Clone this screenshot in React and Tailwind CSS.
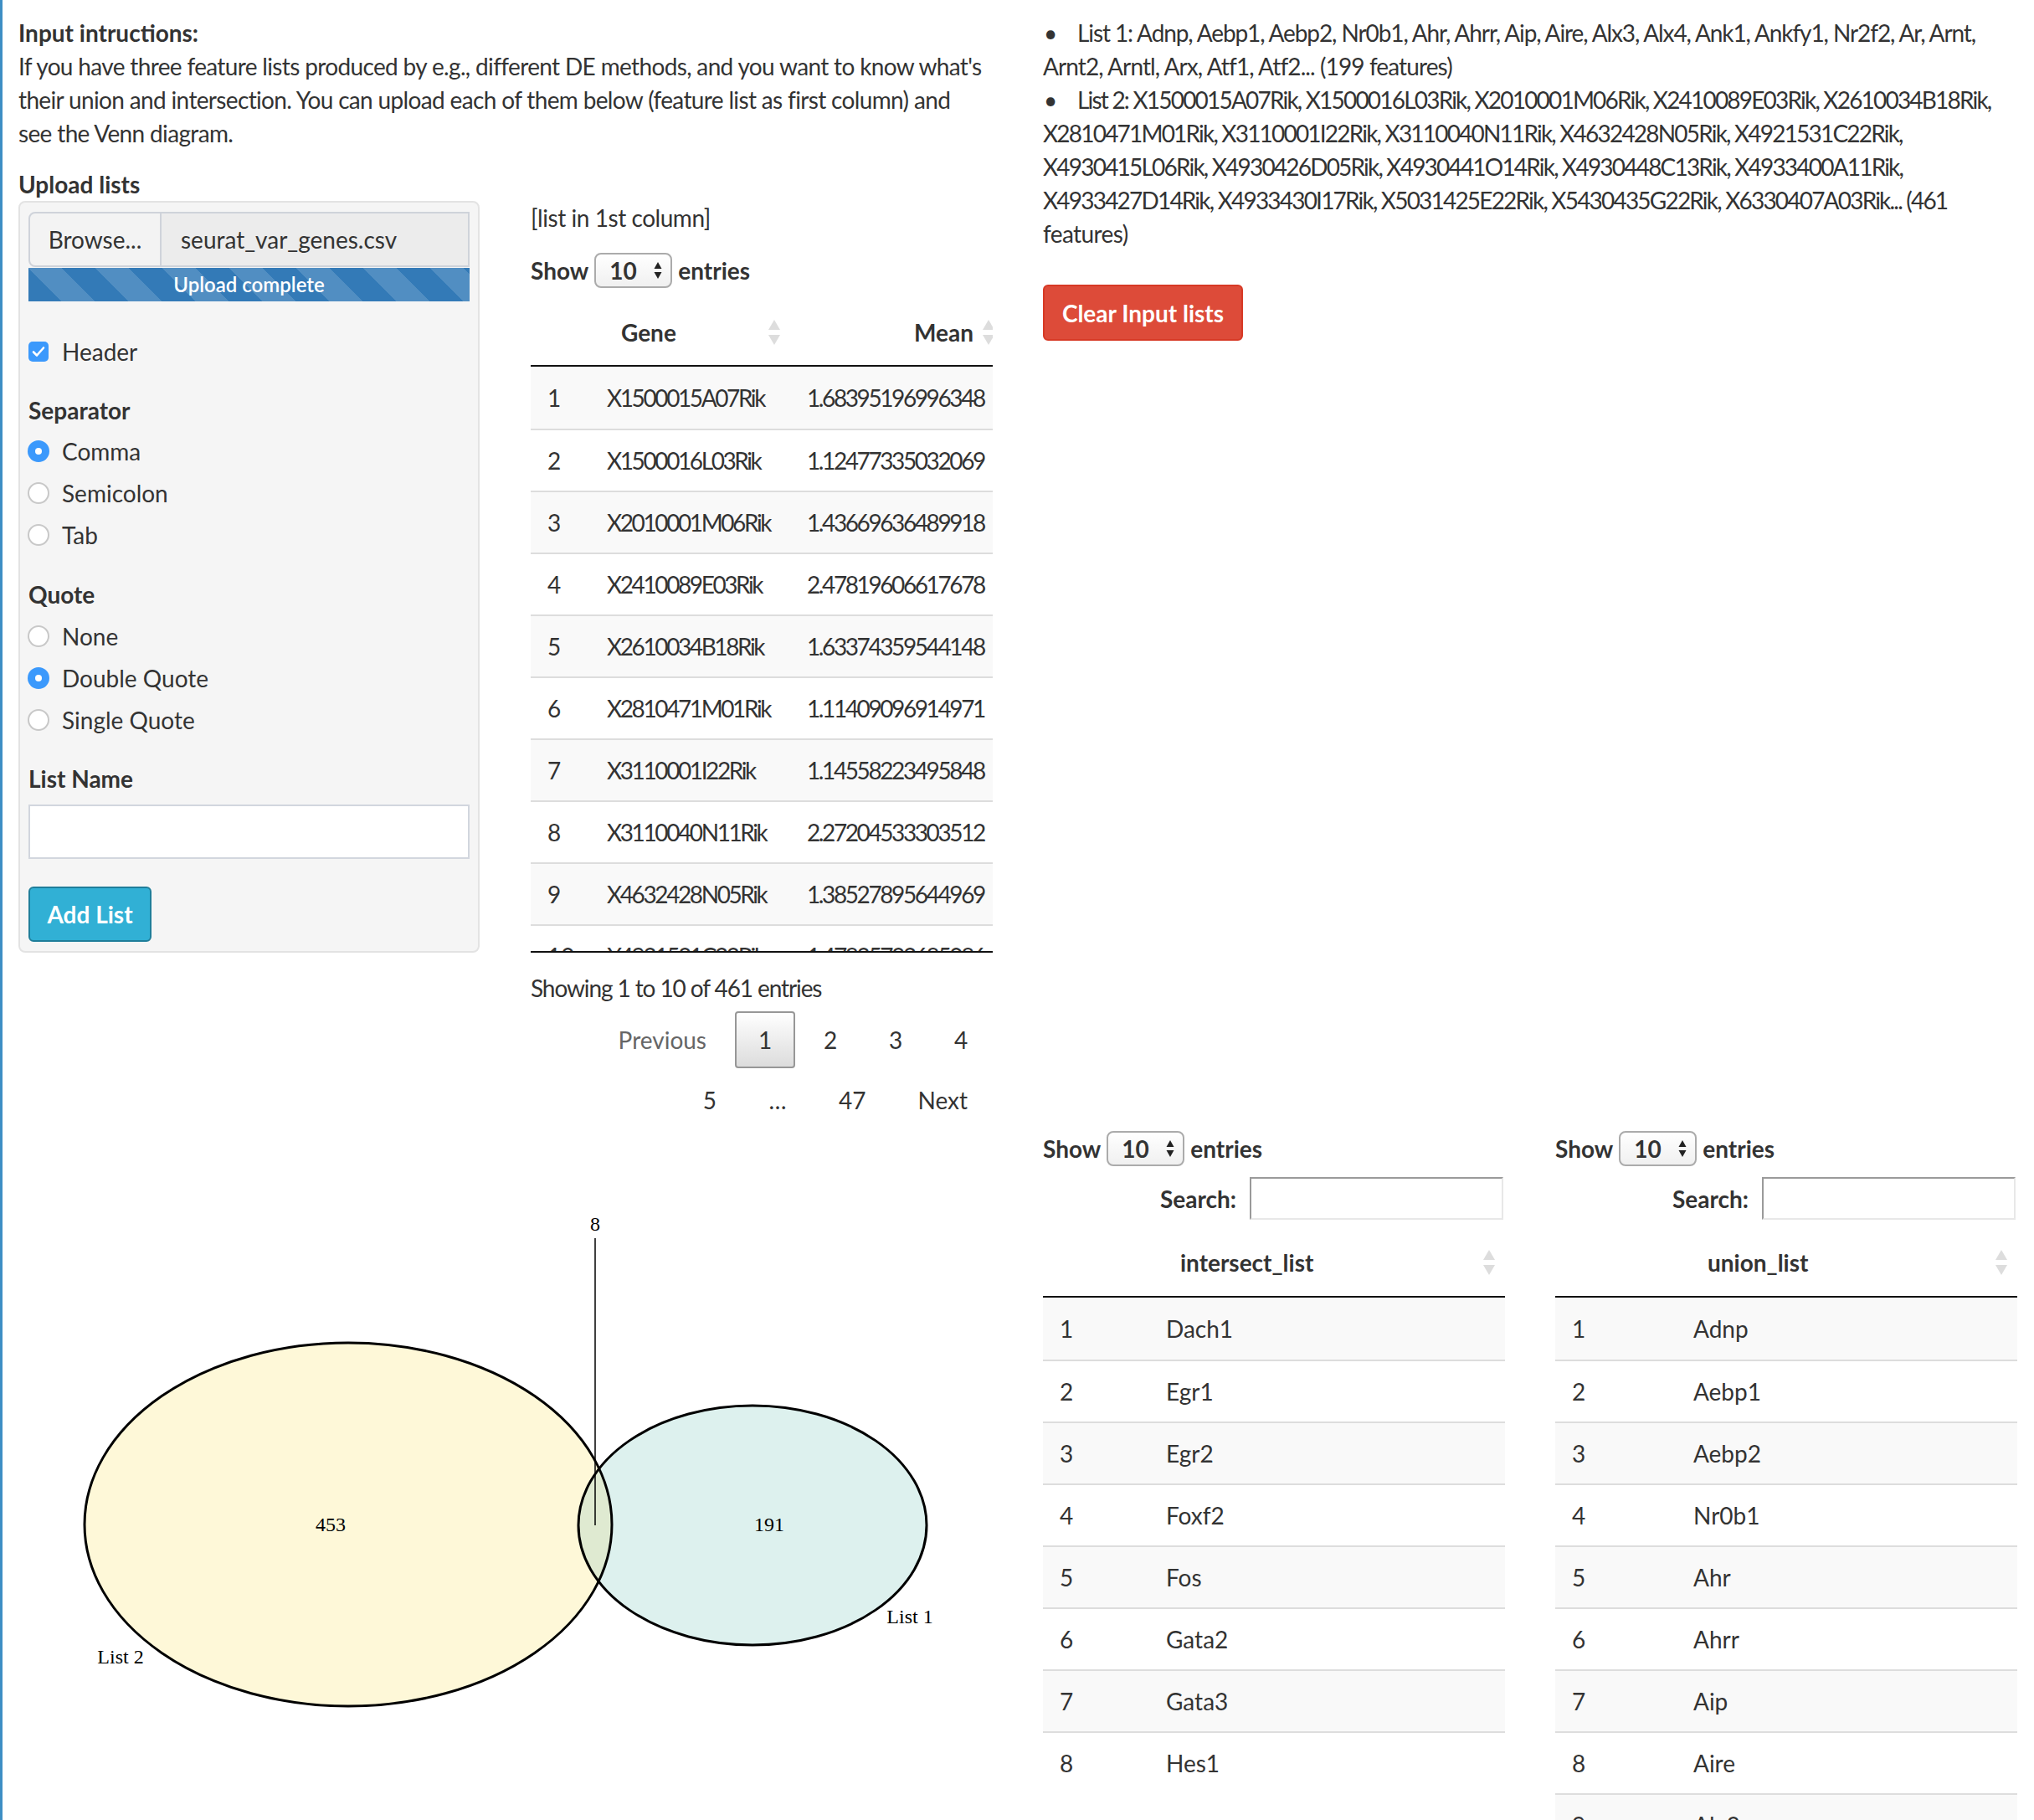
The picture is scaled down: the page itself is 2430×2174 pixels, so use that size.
import React from 'react';

const genes = [
  ['X1500015A07Rik', '1.68395196996348'],
  ['X1500016L03Rik', '1.12477335032069'],
  ['X2010001M06Rik', '1.43669636489918'],
  ['X2410089E03Rik', '2.47819606617678'],
  ['X2610034B18Rik', '1.63374359544148'],
  ['X2810471M01Rik', '1.11409096914971'],
  ['X3110001I22Rik', '1.14558223495848'],
  ['X3110040N11Rik', '2.27204533303512'],
  ['X4632428N05Rik', '1.38527895644969'],
  ['X4921531C22Rik', '1.47825732685086'],
];

const intersectList = ['Dach1', 'Egr1', 'Egr2', 'Foxf2', 'Fos', 'Gata2', 'Gata3', 'Hes1'];
const unionList = ['Adnp', 'Aebp1', 'Aebp2', 'Nr0b1', 'Ahr', 'Ahrr', 'Aip', 'Aire', 'Alx3'];

function SortIcon() {
    return (
        <svg width="14" height="30" viewBox="0 0 14 30" className="absolute right-[12px] top-1/2 -translate-y-1/2">
            <path d="M7 0 L14 12 L0 12 Z" fill="#dddddd" />
            <path d="M0 18 L14 18 L7 30 Z" fill="#dddddd" />
        </svg>
    );
}

function LengthSelect() {
    return (
        <div className="mx-[7px] flex h-[42px] w-[93px] items-center justify-between rounded-[8px] border-2 border-[#ababab] bg-linear-to-b from-white to-[#f0f0f0] pl-[16px] pr-[10px]">
            <span className="font-bold">10</span>
            <svg width="10" height="24" viewBox="0 0 10 24">
                <path d="M5 2 L9.5 10 L0.5 10 Z M0.5 14 L9.5 14 L5 22 Z" fill="#222" />
            </svg>
        </div>
    );
}

function ShowEntries() {
    return (
        <div className="flex h-[42px] items-center font-bold">
            <span>Show</span>
            <LengthSelect />
            <span>entries</span>
        </div>
    );
}

function Radio({ checked, label }) {
    return (
        <div className="flex h-[50px] items-center">
            {checked ? (
                <span className="ml-[-1px] flex h-[26px] w-[26px] items-center justify-center rounded-full bg-[#3b99fc]">
                    <span className="h-[8px] w-[8px] rounded-full bg-white" />
                </span>
            ) : (
                <span className="ml-[-1px] h-[26px] w-[26px] rounded-full border-2 border-[#c8c8c8] bg-white" />
            )}
            <span className="ml-[15px]">{label}</span>
        </div>
    );
}

function UploadWell() {
    return (
        <div className="h-[898px] rounded-[8px] border-2 border-[#e3e3e3] bg-[#f5f5f5] px-[10px] pt-[11px]">
            {/* file input */}
            <div className="flex h-[66px]">
                <div className="flex w-[159px] items-center justify-center rounded-l-[8px] border-2 border-[#cfd3da] bg-[#f3f3f3]">
                    Browse...
                </div>
                <div className="flex flex-1 items-center border-y-2 border-r-2 border-[#cfd3da] bg-[#ececec] pl-[23px]">
                    seurat_var_genes.csv
                </div>
            </div>
            {/* progress */}
            <div className="mt-[1px] flex h-[40px] items-center justify-center bg-[#337ab7] bg-[linear-gradient(45deg,rgba(255,255,255,0.15)_25%,transparent_25%,transparent_50%,rgba(255,255,255,0.15)_50%,rgba(255,255,255,0.15)_75%,transparent_75%,transparent)] bg-[length:80px_80px] text-[24px] font-semibold text-white">
                Upload complete
            </div>

            <div className="mt-[40px] flex h-[40px] items-center">
                <span className="flex h-[24px] w-[24px] items-center justify-center rounded-[5px] bg-[#3b99fc]">
                    <svg width="16" height="14" viewBox="0 0 16 14">
                        <path d="M2 7.5 L6 11.5 L14 2.5" stroke="white" strokeWidth="2.6" fill="none" strokeLinecap="round" strokeLinejoin="round" />
                    </svg>
                </span>
                <span className="ml-[16px]">Header</span>
            </div>

            <div className="mt-[30px] h-[40px] font-bold">Separator</div>
            <div className="mt-[4px]">
                <Radio checked label="Comma" />
                <Radio label="Semicolon" />
                <Radio label="Tab" />
            </div>

            <div className="mt-[26px] h-[40px] font-bold">Quote</div>
            <div className="mt-[5px]">
                <Radio label="None" />
                <Radio checked label="Double Quote" />
                <Radio label="Single Quote" />
            </div>

            <div className="mt-[25px] h-[40px] font-bold">List Name</div>
            <div className="mt-[11px] h-[65px] border-2 border-[#d2d6de] bg-white" />

            <button className="mt-[33px] h-[66px] w-[147px] rounded-[6px] border-2 border-[#1f7e9a] bg-[#31b0d5] font-bold text-white">
                Add List
            </button>
        </div>
    );
}

function MainTable() {
    return (
        <div>
            <div className="h-[40px] tracking-[-0.45px]">[list in 1st column]</div>
            <div className="mt-[22px]">
                <ShowEntries />
            </div>

            <div className="mt-[13px] w-[552px] overflow-hidden">
                <div className="w-[566px]">
                    <div className="flex h-[81px] items-center border-b-2 border-[#111] font-bold">
                        <div className="w-[71px]" />
                        <div className="relative flex h-full w-[239px] items-center pl-[37px]">
                            Gene
                            <SortIcon />
                        </div>
                        <div className="relative flex h-full w-[256px] items-center justify-end pr-[37px]">
                            Mean
                            <SortIcon />
                        </div>
                    </div>
                    {/* scroll body: the 10th row is cut off at the bottom */}
                    <div className="h-[700px] overflow-hidden border-b-2 border-[#111]">
                        {genes.map(([g, m], i) => (
                            <div
                                key={g}
                                className={`flex h-[74px] items-center whitespace-nowrap ${i % 2 === 0 ? 'bg-[#f9f9f9]' : 'bg-white'} ${i > 0 ? 'border-t-2 border-[#dddddd]' : ''}`}
                            >
                                <div className="w-[71px] pl-[20px]">{i + 1}</div>
                                <div className="w-[239px] pl-[20px] tracking-[-2.4px]">{g}</div>
                                <div className="w-[256px] pl-[20px] tracking-[-2.4px]">{m}</div>
                            </div>
                        ))}
                    </div>
                </div>
            </div>

            <div className="mt-[22px] h-[40px] tracking-[-1.1px]">Showing 1 to 10 of 461 entries</div>

            {/* pagination */}
            <div className="mt-[8px] flex h-[68px] items-center justify-end pr-[2px]">
                <span className="px-[28px] text-[#666]">Previous</span>
                <span className="ml-[6px] flex h-[68px] w-[72px] items-center justify-center rounded-[4px] border-2 border-[#979797] bg-linear-to-b from-white to-[#dcdcdc]">1</span>
                <span className="ml-[6px] w-[72px] text-center">2</span>
                <span className="ml-[6px] w-[72px] text-center">3</span>
                <span className="ml-[6px] w-[72px] text-center">4</span>
            </div>
            <div className="mt-[4px] flex h-[68px] items-center justify-end pr-[2px]">
                <span className="w-[72px] text-center">5</span>
                <span className="ml-[6px] w-[78px] text-center">…</span>
                <span className="ml-[6px] min-w-[72px] px-[28px] text-center">47</span>
                <span className="ml-[6px] px-[28px]">Next</span>
            </div>
        </div>
    );
}

function SmallTable({ name, items, indexWidth }) {
    return (
        <div>
            <div className="mt-[2px] flex h-[43px] items-center">
                <ShowEntries />
            </div>
            <div className="mt-[13px] flex h-[51px] items-center justify-end pr-[2px]">
                <span className="font-bold">Search:</span>
                <div className="ml-[16px] h-[51px] w-[303px] border-2 border-b-[#e8e8e8] border-l-[#9a9a9a] border-r-[#e8e8e8] border-t-[#9a9a9a] bg-white" />
            </div>
            <div className="mt-[11px] flex h-[82px] items-center border-b-2 border-[#111] font-bold">
                <div style={{ width: indexWidth }} />
                <div className="relative flex h-full flex-1 items-center pl-[37px]">
                    {name}
                    <SortIcon />
                </div>
            </div>
            {items.map((it, i) => (
                <div
                    key={it}
                    className={`flex h-[74px] items-center ${i % 2 === 0 ? 'bg-[#f9f9f9]' : 'bg-white'} ${i > 0 ? 'border-t-2 border-[#dddddd]' : ''}`}
                >
                    <div className="pl-[20px]" style={{ width: indexWidth }}>{i + 1}</div>
                    <div className="pl-[20px]">{it}</div>
                </div>
            ))}
        </div>
    );
}

function VennPlot() {
    const serif = "'Liberation Serif', 'Times New Roman', serif";
    return (
        <svg width="1164" height="826" viewBox="22 1348 1164 826">
            <defs>
                <clipPath id="leftSet">
                    <ellipse cx="416" cy="1821" rx="315" ry="217" />
                </clipPath>
            </defs>
            <ellipse cx="416" cy="1821" rx="315" ry="217" fill="#fef8d8" />
            <ellipse cx="899" cy="1822" rx="208" ry="143" fill="#ddf1ee" />
            <ellipse cx="899" cy="1822" rx="208" ry="143" fill="#dfead1" clipPath="url(#leftSet)" />
            <ellipse cx="416" cy="1821" rx="315" ry="217" fill="none" stroke="#000" strokeWidth="3" />
            <ellipse cx="899" cy="1822" rx="208" ry="143" fill="none" stroke="#000" strokeWidth="3" />
            <line x1="711" y1="1479" x2="711" y2="1822" stroke="#000" strokeWidth="1.5" />
            <g fontFamily={serif} fontSize="24" fill="#000" textAnchor="middle">
                <text x="711" y="1470">8</text>
                <text x="395" y="1829">453</text>
                <text x="919" y="1829">191</text>
                <text x="144" y="1987">List 2</text>
                <text x="1087" y="1939">List 1</text>
            </g>
        </svg>
    );
}

export default function App() {
    return (
        <div className="h-[2174px] w-[2430px] overflow-hidden border-l-[3px] border-[#3e8ec4] bg-white pl-[19px] pt-[19px] font-[Lato,sans-serif] text-[28px] leading-[40px] text-[#333]">
            <div className="grid grid-cols-[1164px_1164px] gap-x-[60px]">
                {/* Left: instructions + upload */}
                <div>
                    <div className="h-[40px] font-bold">Input intructions:</div>
                    <p className="whitespace-nowrap tracking-[-0.65px]">
                        If you have three feature lists produced by e.g., different DE methods, and you want to know what's
                        <br />
                        their union and intersection. You can upload each of them below (feature list as first column) and
                        <br />
                        see the Venn diagram.
                    </p>
                    <div className="mt-[21px] h-[40px] font-bold">Upload lists</div>
                    <div className="grid grid-cols-[551px_552px] gap-x-[61px]">
                        <UploadWell />
                        <MainTable />
                    </div>
                </div>

                {/* Right: list summary */}
                <div>
                    <div className="whitespace-nowrap">
                        <div className="tracking-[-1.1px]">
                            <span className="inline-block w-[41px] pl-[1px] tracking-normal">•</span>
                            List 1: Adnp, Aebp1, Aebp2, Nr0b1, Ahr, Ahrr, Aip, Aire, Alx3, Alx4, Ank1, Ankfy1, Nr2f2, Ar, Arnt,
                        </div>
                        <div className="tracking-[-0.9px]">Arnt2, Arntl, Arx, Atf1, Atf2... (199 features)</div>
                        <div className="tracking-[-1.8px]">
                            <span className="inline-block w-[41px] pl-[1px] tracking-normal">•</span>
                            List 2: X1500015A07Rik, X1500016L03Rik, X2010001M06Rik, X2410089E03Rik, X2610034B18Rik,
                        </div>
                        <div className="tracking-[-1.8px]">X2810471M01Rik, X3110001I22Rik, X3110040N11Rik, X4632428N05Rik, X4921531C22Rik,</div>
                        <div className="tracking-[-1.8px]">X4930415L06Rik, X4930426D05Rik, X4930441O14Rik, X4930448C13Rik, X4933400A11Rik,</div>
                        <div className="tracking-[-1.8px]">X4933427D14Rik, X4933430I17Rik, X5031425E22Rik, X5430435G22Rik, X6330407A03Rik... (461</div>
                        <div className="tracking-[-0.6px]">features)</div>
                    </div>
                    <button className="mt-[41px] h-[67px] w-[239px] rounded-[6px] border-2 border-[#d73925] bg-[#dd4b39] font-bold text-white">
                        Clear Input lists
                    </button>
                </div>

                {/* Venn diagram */}
                <VennPlot />

                {/* Result tables */}
                <div className="grid grid-cols-[552px_552px] gap-x-[60px]">
                    <SmallTable name="intersect_list" items={intersectList} indexWidth={127} />
                    <SmallTable name="union_list" items={unionList} indexWidth={145} />
                </div>
            </div>
        </div>
    );
}
